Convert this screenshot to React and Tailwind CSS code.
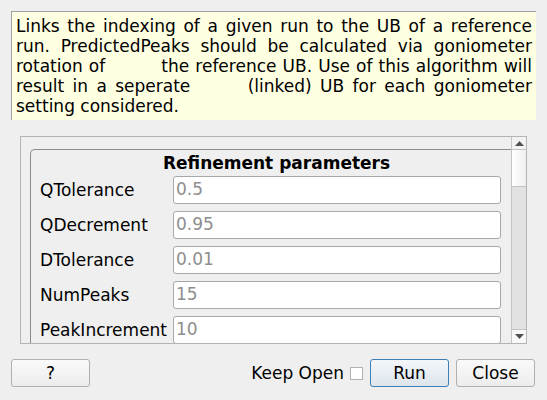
import React from "react";

const rows = [
  { label: "QTolerance", value: "0.5" },
  { label: "QDecrement", value: "0.95" },
  { label: "DTolerance", value: "0.01" },
  { label: "NumPeaks", value: "15" },
  { label: "PeakIncrement", value: "10" },
];

const Btn = ({ children, primary, className = "" }) => (
  <button
    className={`h-[28px] rounded-[3px] border text-[17px] leading-none text-black ${
      primary
        ? "border-[#3d7fb5] bg-gradient-to-b from-[#f4f7fa] to-[#dde5ec]"
        : "border-[#b0b0b0] bg-gradient-to-b from-[#fafafa] to-[#ececec]"
    } ${className}`}
  >
    {children}
  </button>
);

const App = () => {
  return (
    <div
      className="w-[547px] h-[400px] bg-[#efefef] overflow-hidden flex flex-col text-black"
      style={{ fontFamily: "'DejaVu Sans', sans-serif" }}
    >
      {/* description */}
      <div className="mt-[11px] ml-[11px] w-[525px] h-[109px] bg-[#ffffe1] border-l border-t border-[#a0a0a0] pl-[4px] pr-[4px] pt-[4px] text-[17px] leading-[20px]">
        <div className="text-justify [text-align-last:justify]">
          Links the indexing of a given run to the UB of a reference
        </div>
        <div className="text-justify [text-align-last:justify]">
          run. PredictedPeaks should be calculated via goniometer
        </div>
        <div className="text-justify [text-align-last:justify]">
          rotation of<span className="inline-block w-[50px]" /> the reference UB. Use of this algorithm will
        </div>
        <div className="text-justify [text-align-last:justify]">
          result in a seperate<span className="inline-block w-[49px]" /> (linked) UB for each goniometer
        </div>
        <div>setting considered.</div>
      </div>

      {/* scroll area */}
      <div className="mt-[16px] ml-[20px] w-[507px] h-[208px] border border-[#b4b4b4] flex overflow-hidden">
        <div className="flex-1 overflow-hidden pl-[9px] pt-[12px]">
          <div className="border-l border-t border-[#8c8c8c] rounded-tl-[5px] h-[300px] pl-[9px]">
            <div className="h-[25px] pt-[3px] text-center font-bold text-[17px] leading-[20px] pl-[2px]">
              Refinement parameters
            </div>
            <div className="flex flex-col gap-[7px] pt-[1px]">
              {rows.map((r) => (
                <div key={r.label} className="flex items-center h-[28px]">
                  <div className="w-[133px] text-[17px] leading-[20px] whitespace-nowrap">{r.label}</div>
                  <div className="w-[328px] h-[28px] bg-white border border-[#a8a8a8] rounded-[3px] pl-[2px] flex items-center text-[17px] text-[#8e8e8e]">
                    {r.value}
                  </div>
                </div>
              ))}
            </div>
          </div>
        </div>
        {/* scrollbar */}
        <div className="w-[15px] flex flex-col border-l border-[#c4c4c4] bg-[#e2e2e2]">
          <div className="h-[13px] bg-[#f2f2f2] border-b border-[#c4c4c4] flex items-center justify-center">
            <svg width="9" height="5" viewBox="0 0 9 5">
              <path d="M0 5 L4.5 0 L9 5 Z" fill="#505050" />
            </svg>
          </div>
          <div className="h-[37px] bg-gradient-to-r from-[#ffffff] to-[#f0f0f0] border-b border-[#c4c4c4]" />
          <div className="flex-1" />
          <div className="h-[14px] bg-[#f8f8f8] border-t border-[#c4c4c4] flex items-center justify-center">
            <svg width="9" height="5" viewBox="0 0 9 5">
              <path d="M0 0 L4.5 5 L9 0 Z" fill="#505050" />
            </svg>
          </div>
        </div>
      </div>

      {/* buttons */}
      <div className="mt-[15px] flex items-center">
        <Btn className="ml-[11px] w-[79px]">?</Btn>
        <div className="flex-1" />
        <span className="text-[17px] leading-[20px]">Keep Open</span>
        <div className="ml-[6px] w-[13px] h-[13px] bg-white border border-[#b0b0b0]" />
        <Btn primary className="ml-[7px] w-[79px]">Run</Btn>
        <Btn className="ml-[7px] mr-[12px] w-[79px]">Close</Btn>
      </div>
    </div>
  );
};

export default App;
